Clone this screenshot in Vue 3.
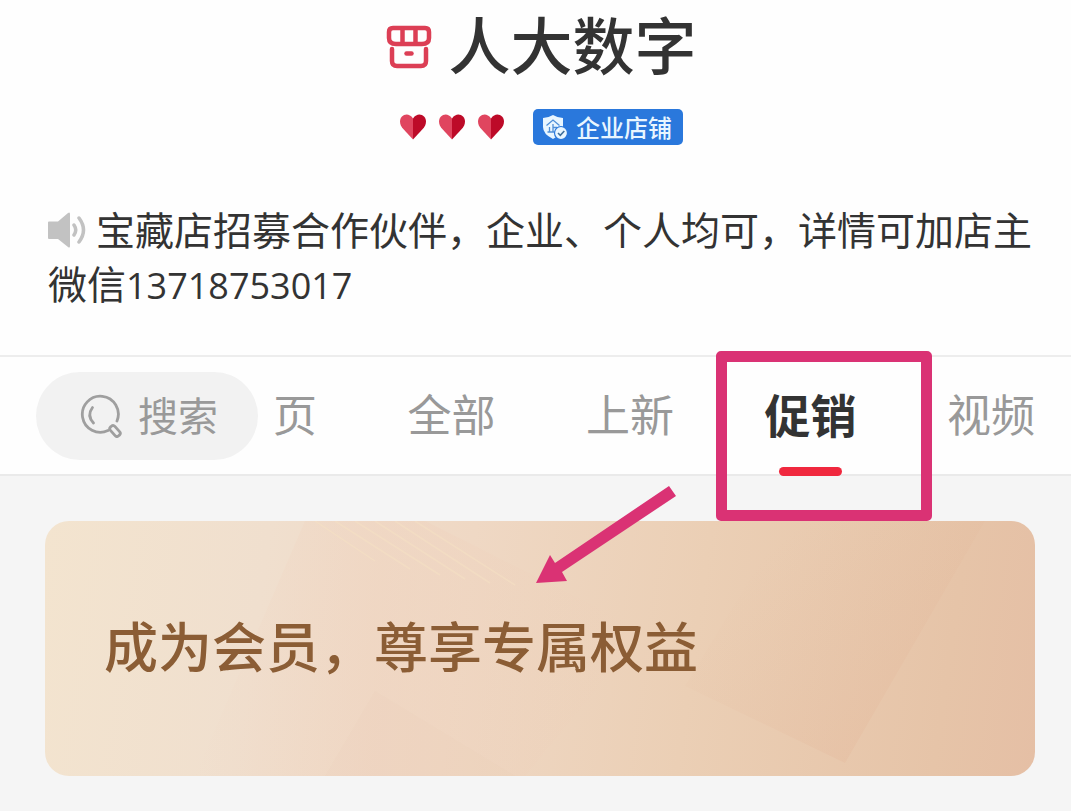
<script setup>
import { ref } from 'vue'

const tabs = ['页', '全部', '上新', '促销', '视频']
const active = ref('促销')
</script>

<template>
  <div class="page">
    <header class="shop">
      <div class="title-row">
        <svg class="store" viewBox="0 0 46 44" aria-hidden="true">
          <g fill="none" stroke="#dc3f55" stroke-width="4.500" stroke-linejoin="round" stroke-linecap="round">
            <path d="M7 3h32q4 0 4 4v6q0 6-7 6H10q-7 0-7-6V7q0-4 4-4z" />
            <path d="M16.500 4v14M29.500 4v14" />
            <path d="M6 24v12q0 5 5 5h24q5 0 5-5V24" />
            <path d="M20.500 28.500h5" />
          </g>
        </svg>
        <h1>人大数字</h1>
      </div>
      <div class="rank-row">
        <div class="hearts" aria-hidden="true">
          <svg v-for="n in 3" :key="n" class="heart" viewBox="0 0 26 26">
            <path d="M13 4.500C11 1.500 8.800.5 6.700.5 3 .5 0 3.500 0 7.800c0 3 1.500 5.200 3.300 7.300L13 25.500z" fill="#e0455f" />
            <path d="M13 4.500C15 1.500 17.200.5 19.300.5 23 .5 26 3.500 26 7.800c0 3-1.500 5.200-3.300 7.300L13 25.500z" fill="#bd0a28" />
          </svg>
        </div>
        <div class="badge">
          <svg class="shield" viewBox="0 0 26 26" aria-hidden="true">
            <path d="M11 1Q6 4 1 4v9q0 7 10 12 10-5 10-12V4Q16 4 11 1z" fill="#e9f6ff" />
            <path d="M4.500 11.500L11 6l6.500 5.500M11 10v8M11 13.500h4M7.500 13v5M5.500 18h9" fill="none" stroke="#4f8fd8" stroke-width="1.300" />
            <circle cx="19" cy="19" r="6.500" fill="#e9f6ff" stroke="#2a78dc" stroke-width="1.200" />
            <path d="M16 19l2.300 2.300 4-4.300" fill="none" stroke="#3f6f9c" stroke-width="1.600" />
          </svg>
          <span>企业店铺</span>
        </div>
      </div>
      <p class="notice">
        <svg class="speaker" viewBox="0 0 40 36" aria-hidden="true">
          <path d="M1 9.500h9L20 1q2-1.500 2 1v32q0 2.500-2 1L10 27H1q-1 0-1-1V10.500q0-1 1-1z" fill="#c2c2c2" />
          <path d="M26 13q3.500 5 0 10M31 6q9 12 0 24" fill="none" stroke="#c2c2c2" stroke-width="3.500" stroke-linecap="round" />
        </svg>宝藏店招募合作伙伴，企业、个人均可，详情可加店主微信<span class="digits">13718753017</span>
      </p>
    </header>

    <nav class="bar">
      <button class="search" type="button">
        <svg class="lens" viewBox="0 0 42 44" aria-hidden="true">
          <g fill="none" stroke="#9f9f9f" stroke-width="2.800" stroke-linecap="round">
            <path d="M28 36.500A18 18 0 1 1 37 27" />
            <path d="M12.500 13.500q-6 8 1 15.500" />
            <rect x="29" y="34" width="12" height="6" rx="2.500" transform="rotate(48 35 37)" />
          </g>
        </svg>
        <span>搜索</span>
      </button>
      <div class="tabs">
        <button
          v-for="tab in tabs"
          :key="tab"
          type="button"
          class="tab"
          :class="{ active: tab === active }"
          @click="active = tab"
        >
          {{ tab }}
          <span v-if="tab === active" class="underline"></span>
          <span v-if="tab === '促销'" class="frame"></span>
        </button>
      </div>
    </nav>

    <main class="content">
      <section class="member">
        <svg class="texture" viewBox="0 0 990 255" preserveAspectRatio="none" aria-hidden="true">
          <defs>
            <linearGradient id="facet" x1="0" y1="0" x2="1" y2="1">
              <stop offset="0.200" stop-color="#e2b496" stop-opacity="0" />
              <stop offset="1" stop-color="#e2b093" stop-opacity=".32" />
            </linearGradient>
            <linearGradient id="fold" x1="0" y1="0" x2="1" y2="0">
              <stop offset="0" stop-color="#efcdb8" stop-opacity="0" />
              <stop offset=".4" stop-color="#efcdb8" stop-opacity=".3" />
              <stop offset="1" stop-color="#efcdb8" stop-opacity="0" />
            </linearGradient>
          </defs>
          <path d="M260 0h120l220 110-120 145H150z" fill="url(#fold)" />
          <path d="M330 170l140 85H280z" fill="#e8c7ac" opacity=".07" />
          <path d="M740 0h200L800 242 640 165z" fill="url(#facet)" />
          <g stroke="#f6e2c4" stroke-width="1.500" opacity=".5">
            <path d="M270 0l60 40M290 0l75 48M310 0l85 54M330 0l90 58M350 0l95 62M370 0l100 64" />
          </g>
        </svg>
        <h2>成为会员，尊享专属权益</h2>
        <svg class="arrow" viewBox="0 0 140 98" aria-hidden="true">
          <path d="M133 0l7 10L26 86l5 9L0 97 14 69l5 8z" fill="#da3274" />
        </svg>
      </section>
    </main>
  </div>
</template>

<style>
body {
  margin: 0;
  background: #f5f5f5;
}
</style>

<style scoped>
.page {
  min-height: 100vh;
  background: #f5f5f5;
  color: #333;
  font-family: "Noto Sans CJK SC", sans-serif;
}
.shop {
  padding: 12px 36px 46px 48px;
  background: #fefefe;
  border-bottom: 2px solid #ededed;
}
.title-row,
.rank-row {
  display: flex;
  align-items: center;
  justify-content: center;
}
.title-row {
  gap: 16px;
  height: 62px;
}
.store {
  width: 46px;
  height: 44px;
  margin-top: 8px;
}
h1,
h2,
p {
  margin: 0;
}
h1 {
  font-size: 62px;
  line-height: 62px;
  font-weight: 500;
}
.rank-row {
  gap: 29px;
  margin-top: 35px;
}
.hearts {
  display: flex;
  gap: 13px;
}
.heart {
  width: 26px;
  height: 26px;
}
.badge {
  display: flex;
  align-items: center;
  gap: 8px;
  height: 36px;
  padding: 0 11px 0 9px;
  border-radius: 5px;
  background: #2a78dc;
  color: #e9f6ff;
  font-size: 24px;
  line-height: 32px;
  font-weight: 500;
}
.shield {
  width: 26px;
  height: 26px;
}
.notice {
  margin-top: 56px;
  font-size: 39px;
  line-height: 54px;
}
.speaker {
  width: 40px;
  height: 36px;
  margin-right: 8px;
  vertical-align: -3px;
}
.digits {
  font-family: "Open Sans", sans-serif;
  font-size: 36px;
  line-height: 1;
}
.bar {
  display: flex;
  align-items: center;
  gap: 15px;
  height: 117px;
  padding: 0 36px;
  background: #fefefe;
  border-bottom: 2px solid #eaeaea;
}
button {
  border: 0;
  padding: 0;
  background: none;
  color: #999;
  font-family: inherit;
  cursor: pointer;
}
.search {
  display: flex;
  align-items: center;
  justify-content: center;
  gap: 16px;
  width: 222px;
  height: 88px;
  padding: 0 0 4px 4px;
  border-radius: 44px;
  background: #f2f2f2;
  font-size: 40px;
  line-height: 48px;
}
.lens {
  width: 42px;
  height: 44px;
  margin-top: 4px;
}
.tabs {
  display: flex;
  flex: 1;
  justify-content: space-between;
}
.tab {
  position: relative;
  height: 117px;
  padding-bottom: 6px;
  font-size: 44px;
  line-height: 64px;
}
.tab.active {
  color: #333;
  font-size: 46px;
  font-weight: 700;
}
.underline {
  position: absolute;
  left: 14px;
  bottom: -2px;
  width: 63px;
  height: 9px;
  border-radius: 5px;
  background: #f0283e;
}
.frame {
  position: absolute;
  z-index: 1;
  top: -6px;
  left: -49px;
  box-sizing: border-box;
  width: 216px;
  height: 170px;
  border: 11px solid #da3274;
  border-radius: 5px;
}
.content {
  padding: 45px 36px 35px 45px;
}
.member {
  position: relative;
  display: flex;
  align-items: center;
  min-height: 255px;
  padding: 0 59px 8px;
  box-sizing: border-box;
  border-radius: 24px;
  background: linear-gradient(98deg, #f3e4cf 0%, #f0dfce 22%, #efd8c4 42%, #ebcfb5 65%, #e6c4a8 90%, #e5bfa5 100%);
}
.texture {
  position: absolute;
  inset: 0;
  width: 100%;
  height: 100%;
  border-radius: 24px;
}
h2 {
  position: relative;
  color: #8b5d35;
  font-size: 54px;
  line-height: 80px;
  font-weight: 500;
}
.arrow {
  position: absolute;
  top: -35px;
  left: 491px;
  width: 140px;
  height: 98px;
}
</style>
